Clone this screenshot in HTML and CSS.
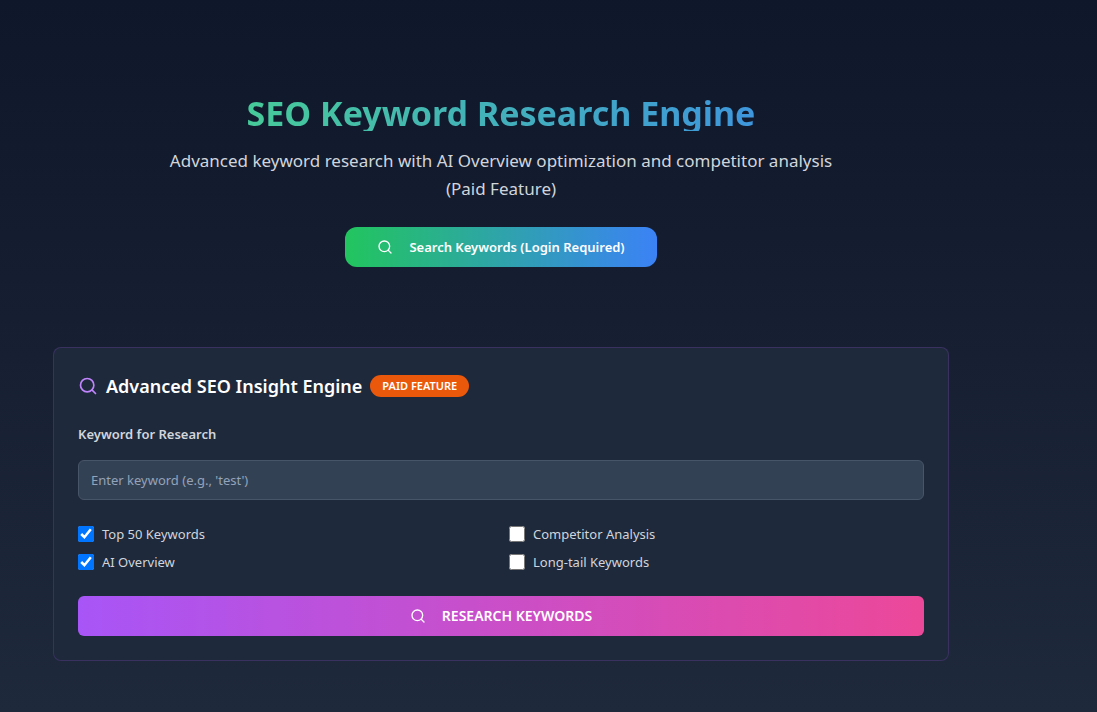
FILE: index.html
```html
<!DOCTYPE html>
<html lang="en">
<head>
<meta charset="utf-8">
<meta name="viewport" content="width=device-width, initial-scale=1">
<title>SEO Keyword Research Engine</title>
<link rel="stylesheet" href="styles.css">
</head>
<body>
<main class="page">
  <div class="container">
    <header class="hero">
      <h1 class="hero-title">SEO Keyword Research Engine</h1>
      <p class="hero-text">Advanced keyword research with AI Overview optimization and competitor analysis (Paid Feature)</p>
      <button type="button" class="button button-login">
        <svg class="icon" viewBox="0 0 24 24" aria-hidden="true"><circle cx="11" cy="11" r="8"/><path d="m21 21-4.3-4.3"/></svg>
        <span>Search Keywords (Login Required)</span>
      </button>
    </header>
    <form class="card">
      <div class="card-head">
        <svg class="icon icon-large" viewBox="0 0 24 24" aria-hidden="true"><circle cx="11" cy="11" r="8"/><path d="m21 21-4.3-4.3"/></svg>
        <h2 class="card-title">Advanced SEO Insight Engine</h2>
        <span class="badge">PAID FEATURE</span>
      </div>
      <div class="field">
        <label class="field-label" for="keyword">Keyword for Research</label>
        <input class="field-input" id="keyword" type="text" placeholder="Enter keyword (e.g., 'test')">
      </div>
      <div class="options">
        <label class="option"><input class="check" type="checkbox" checked>Top 50 Keywords</label>
        <label class="option"><input class="check" type="checkbox">Competitor Analysis</label>
        <label class="option"><input class="check" type="checkbox" checked>AI Overview</label>
        <label class="option"><input class="check" type="checkbox">Long-tail Keywords</label>
      </div>
      <button type="button" class="button button-research">
        <svg class="icon" viewBox="0 0 24 24" aria-hidden="true"><circle cx="11" cy="11" r="8"/><path d="m21 21-4.3-4.3"/></svg>
        <span>RESEARCH KEYWORDS</span>
      </button>
    </form>
  </div>
</main>
</body>
</html>
```
FILE: styles.css
```css
* {
  box-sizing: border-box;
}

body {
  margin: 0;
  min-height: 100vh;
  background: linear-gradient(to bottom, #0f172a, #1e293b);
  color: #fff;
  font-family: "Segoe UI", "Noto Sans", "Open Sans", sans-serif;
  font-size: 13px;
  line-height: 20px;
}

h1, h2, p {
  margin: 0;
}

.page {
  padding: 95px 95px 48px 0;
}

.container {
  max-width: 896px;
  margin: 0 auto;
}

.hero {
  display: flex;
  flex-direction: column;
  align-items: center;
  margin-bottom: 80px;
  text-align: center;
}

.hero-title {
  align-self: stretch;
  margin-bottom: 16px;
  background: linear-gradient(to right, #4ade80, #3b82f6);
  background-clip: text;
  -webkit-background-clip: text;
  color: transparent;
  font-size: 34px;
  font-weight: 700;
  line-height: 36px;
}

.hero-text {
  max-width: 672px;
  margin-bottom: 24px;
  color: #d1d5db;
  font-size: 17px;
  line-height: 28px;
}

.button {
  display: flex;
  align-items: center;
  justify-content: center;
  gap: 16px;
  height: 40px;
  border: 0;
  color: #fff;
  font: inherit;
  font-weight: 600;
  cursor: pointer;
}

.button-login {
  padding: 0 32px;
  border-radius: 12px;
  background: linear-gradient(to right, #22c55e, #3b82f6);
}

.button-research {
  width: 100%;
  border-radius: 6px;
  background: linear-gradient(to right, #a855f7, #ec4899);
  font-size: 14px;
}

.icon {
  flex: none;
  width: 16px;
  height: 16px;
  fill: none;
  stroke: currentColor;
  stroke-width: 2;
  stroke-linecap: round;
  stroke-linejoin: round;
}

.icon-large {
  width: 20px;
  height: 20px;
  color: #c084fc;
}

.card {
  display: flex;
  flex-direction: column;
  gap: 24px;
  padding: 24px;
  border: 1px solid rgba(168, 85, 247, 0.2);
  border-radius: 8px;
  background: #1e293b;
}

.card-head {
  display: flex;
  align-items: center;
  gap: 8px;
}

.card-title {
  font-size: 18px;
  font-weight: 600;
  line-height: 28px;
}

.badge {
  padding: 1px 12px;
  border-radius: 11px;
  background: #ea580c;
  font-size: 11px;
  font-weight: 600;
}

.field {
  display: flex;
  flex-direction: column;
  gap: 16px;
}

.field-label {
  color: #d1d5db;
  font-weight: 600;
}

.field-input {
  width: 100%;
  height: 40px;
  padding: 0 12px;
  border: 1px solid #475569;
  border-radius: 6px;
  background: #334155;
  color: #fff;
  font: inherit;
}

.field-input::placeholder {
  color: #94a3b8;
}

.options {
  display: grid;
  grid-template-columns: 1fr 1fr;
  gap: 8px 16px;
}

.option {
  display: flex;
  align-items: center;
  gap: 8px;
  color: #d1d5db;
}

.check {
  width: 16px;
  height: 16px;
  margin: 0;
  accent-color: #0075ff;
}
```
